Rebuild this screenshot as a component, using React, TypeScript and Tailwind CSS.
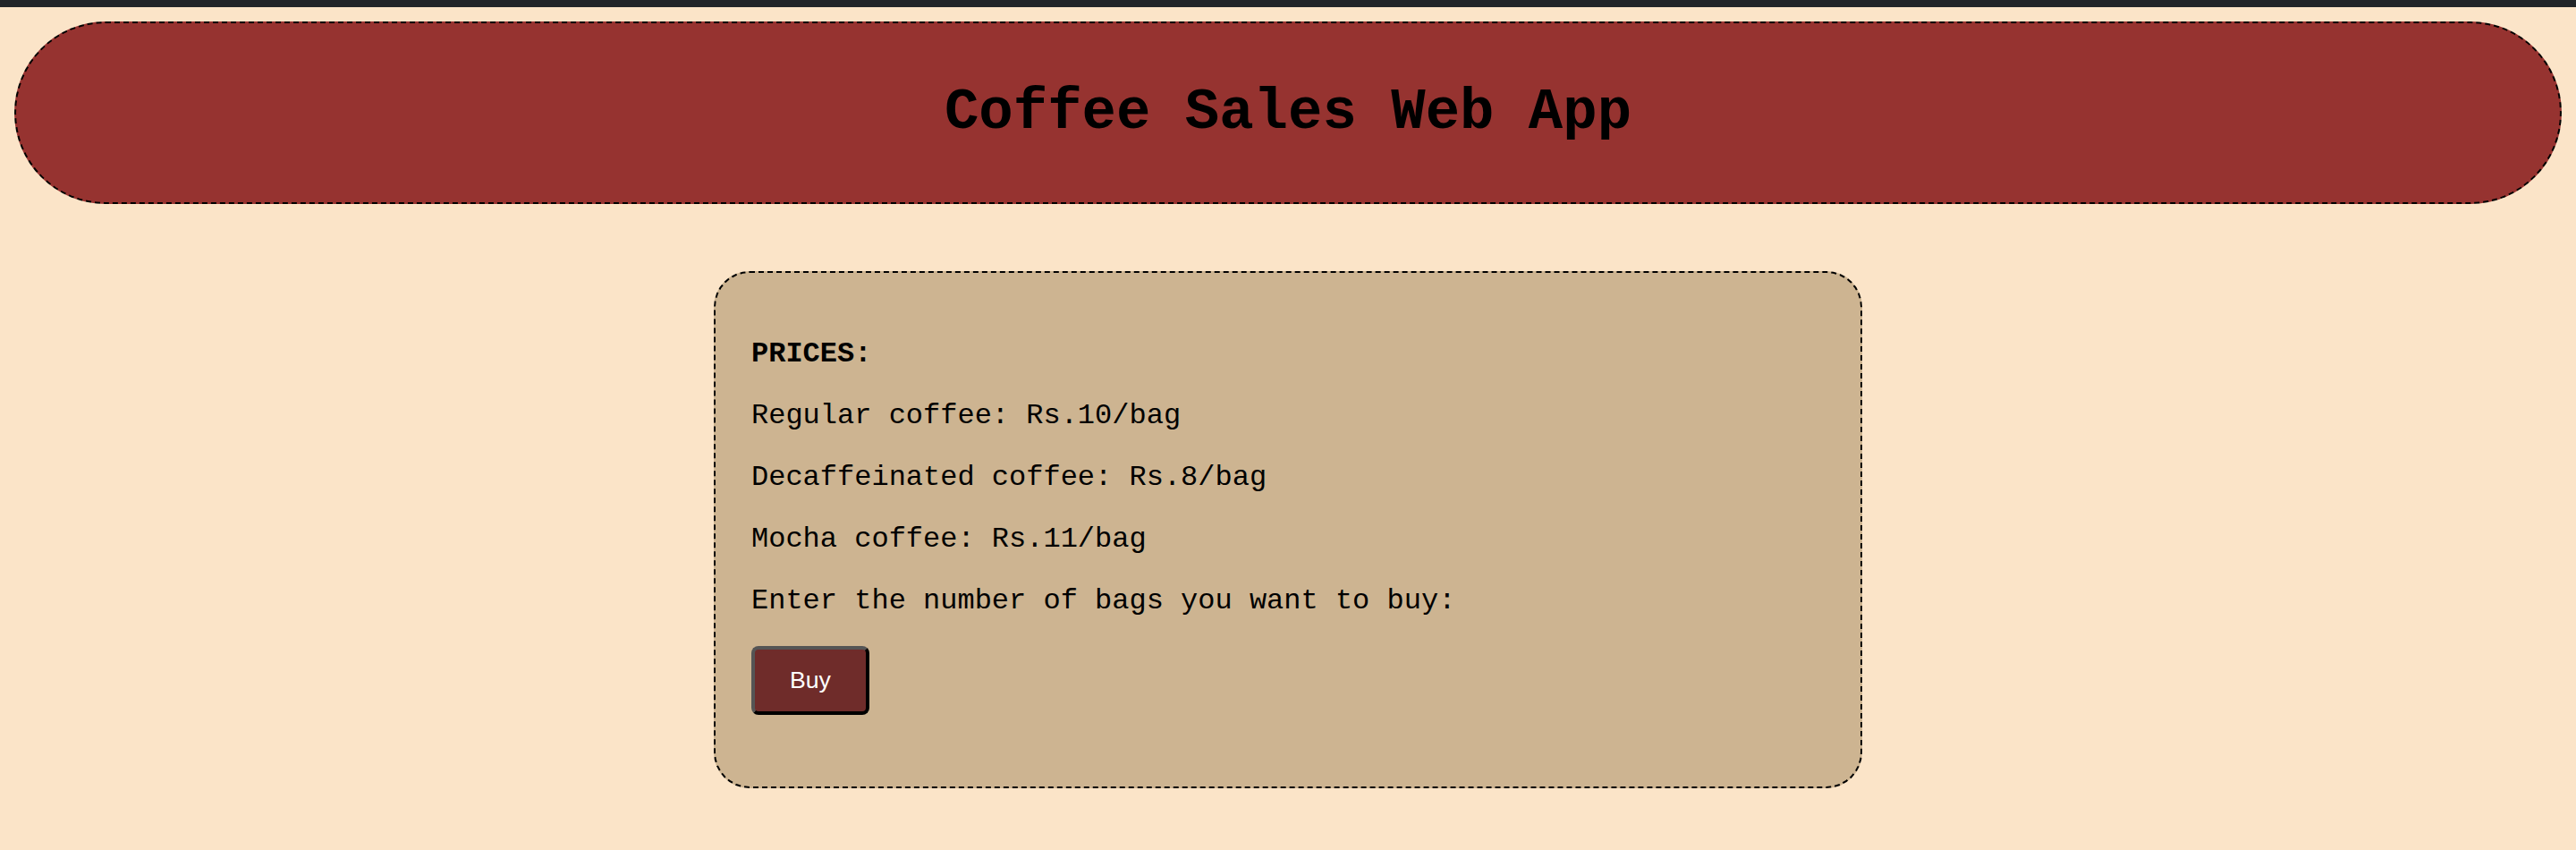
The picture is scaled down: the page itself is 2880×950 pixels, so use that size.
import React from 'react';

const prices = [
  { name: 'Regular coffee', price: 'Rs.10/bag' },
  { name: 'Decaffeinated coffee', price: 'Rs.8/bag' },
  { name: 'Mocha coffee', price: 'Rs.11/bag' },
];

const mono = "font-['Liberation_Mono','Courier_New',monospace]";

const App: React.FC = () => {
  return (
    <div className={`min-h-screen bg-[#fbe4c8] text-black ${mono}`}>
      {/* barre du haut */}
      <div className="h-2 bg-[#212529]" />

      <header className="mx-4 mt-4 flex h-[204px] items-center justify-center rounded-full border-2 border-dashed border-black bg-[#963330]">
        <h1 className="text-[64px] font-bold">Coffee Sales Web App</h1>
      </header>

      <main className="mx-auto mt-[75px] w-[1284px] rounded-[40px] border-2 border-dashed border-black bg-[#cdb491] px-10 pt-10 pb-10">
        <p className="my-8 text-[32px] leading-[37px] font-bold">PRICES:</p>
        {prices.map((item) => (
          <p key={item.name} className="my-8 text-[32px] leading-[37px]">
            {item.name}: {item.price}
          </p>
        ))}
        <p className="my-8 text-[32px] leading-[37px]">Enter the number of bags you want to buy:</p>
        <button
          type="button"
          className="mb-10 rounded-[8px] border-4 border-t-[#555555] border-l-[#555555] border-r-black border-b-black bg-[#6f2c2a] px-[39px] py-5 text-[26.67px] leading-[29px] text-white font-['Liberation_Sans',Arial,sans-serif]"
        >
          Buy
        </button>
      </main>
    </div>
  );
};

export default App;
